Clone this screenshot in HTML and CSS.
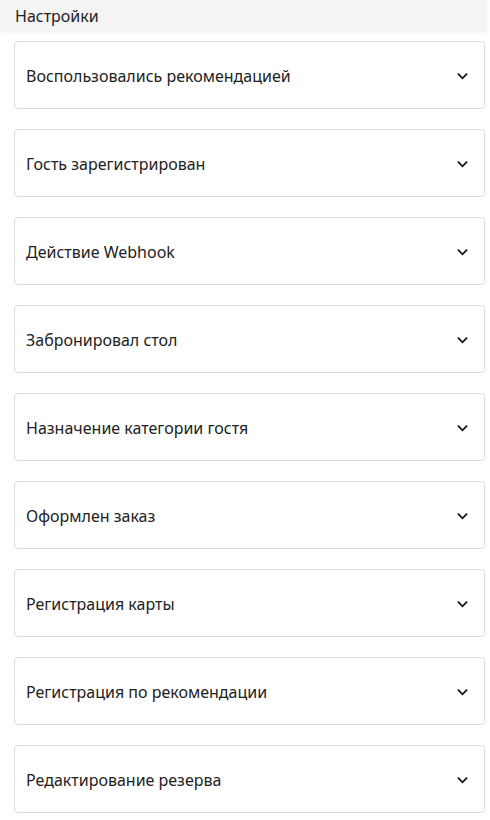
FILE: index.html
```html
<!DOCTYPE html>
<html>
<head>
<meta charset="UTF-8">
<meta name="viewport" content="width=device-width, initial-scale=1.0">
<title>Настройки</title>

<link rel="stylesheet" href="styles.css">

</head>

<body>

<header class="top">
<h1>Настройки</h1>
</header>

<!-- EVENTS -->
<section class="list">

<div class="item"><span>Воспользовались рекомендацией</span><svg class="chev" viewBox="0 0 12 8"><path d="M1 1.5 6 6.5 11 1.5"/></svg></div>
<div class="item"><span>Гость зарегистрирован</span><svg class="chev" viewBox="0 0 12 8"><path d="M1 1.5 6 6.5 11 1.5"/></svg></div>
<div class="item"><span>Действие Webhook</span><svg class="chev" viewBox="0 0 12 8"><path d="M1 1.5 6 6.5 11 1.5"/></svg></div>
<div class="item"><span>Забронировал стол</span><svg class="chev" viewBox="0 0 12 8"><path d="M1 1.5 6 6.5 11 1.5"/></svg></div>
<div class="item"><span>Назначение категории гостя</span><svg class="chev" viewBox="0 0 12 8"><path d="M1 1.5 6 6.5 11 1.5"/></svg></div>
<div class="item"><span>Оформлен заказ</span><svg class="chev" viewBox="0 0 12 8"><path d="M1 1.5 6 6.5 11 1.5"/></svg></div>
<div class="item"><span>Регистрация карты</span><svg class="chev" viewBox="0 0 12 8"><path d="M1 1.5 6 6.5 11 1.5"/></svg></div>
<div class="item"><span>Регистрация по рекомендации</span><svg class="chev" viewBox="0 0 12 8"><path d="M1 1.5 6 6.5 11 1.5"/></svg></div>
<div class="item"><span>Редактирование резерва</span><svg class="chev" viewBox="0 0 12 8"><path d="M1 1.5 6 6.5 11 1.5"/></svg></div>

</section>

</body>
</html>
```

FILE: styles.css
```css
body{
margin:0;
font-family:"Noto Sans",Arial,sans-serif;
color:#222;
background:white;
}

.top{
background:#f4f4f4;
height:32px;
margin-right:5px;
padding:0 15px;
display:flex;
align-items:center;
box-shadow:2px 0 4px rgba(0,0,0,0.06);
}

.top h1{
margin:0;
font-size:16px;
font-weight:normal;
}

/* LIST */
.list{
display:flex;
flex-direction:column;
gap:20px;
padding:9px 5px 0 14px;
}

.item{
box-sizing:border-box;
height:68px;
border:1px solid #dcdcdc;
border-radius:4px;
display:flex;
align-items:center;
justify-content:space-between;
padding:2px 16px 0 11px;
font-size:16px;
}

.chev{
width:11px;
height:8px;
fill:none;
stroke:#111;
stroke-width:2;
}
```
